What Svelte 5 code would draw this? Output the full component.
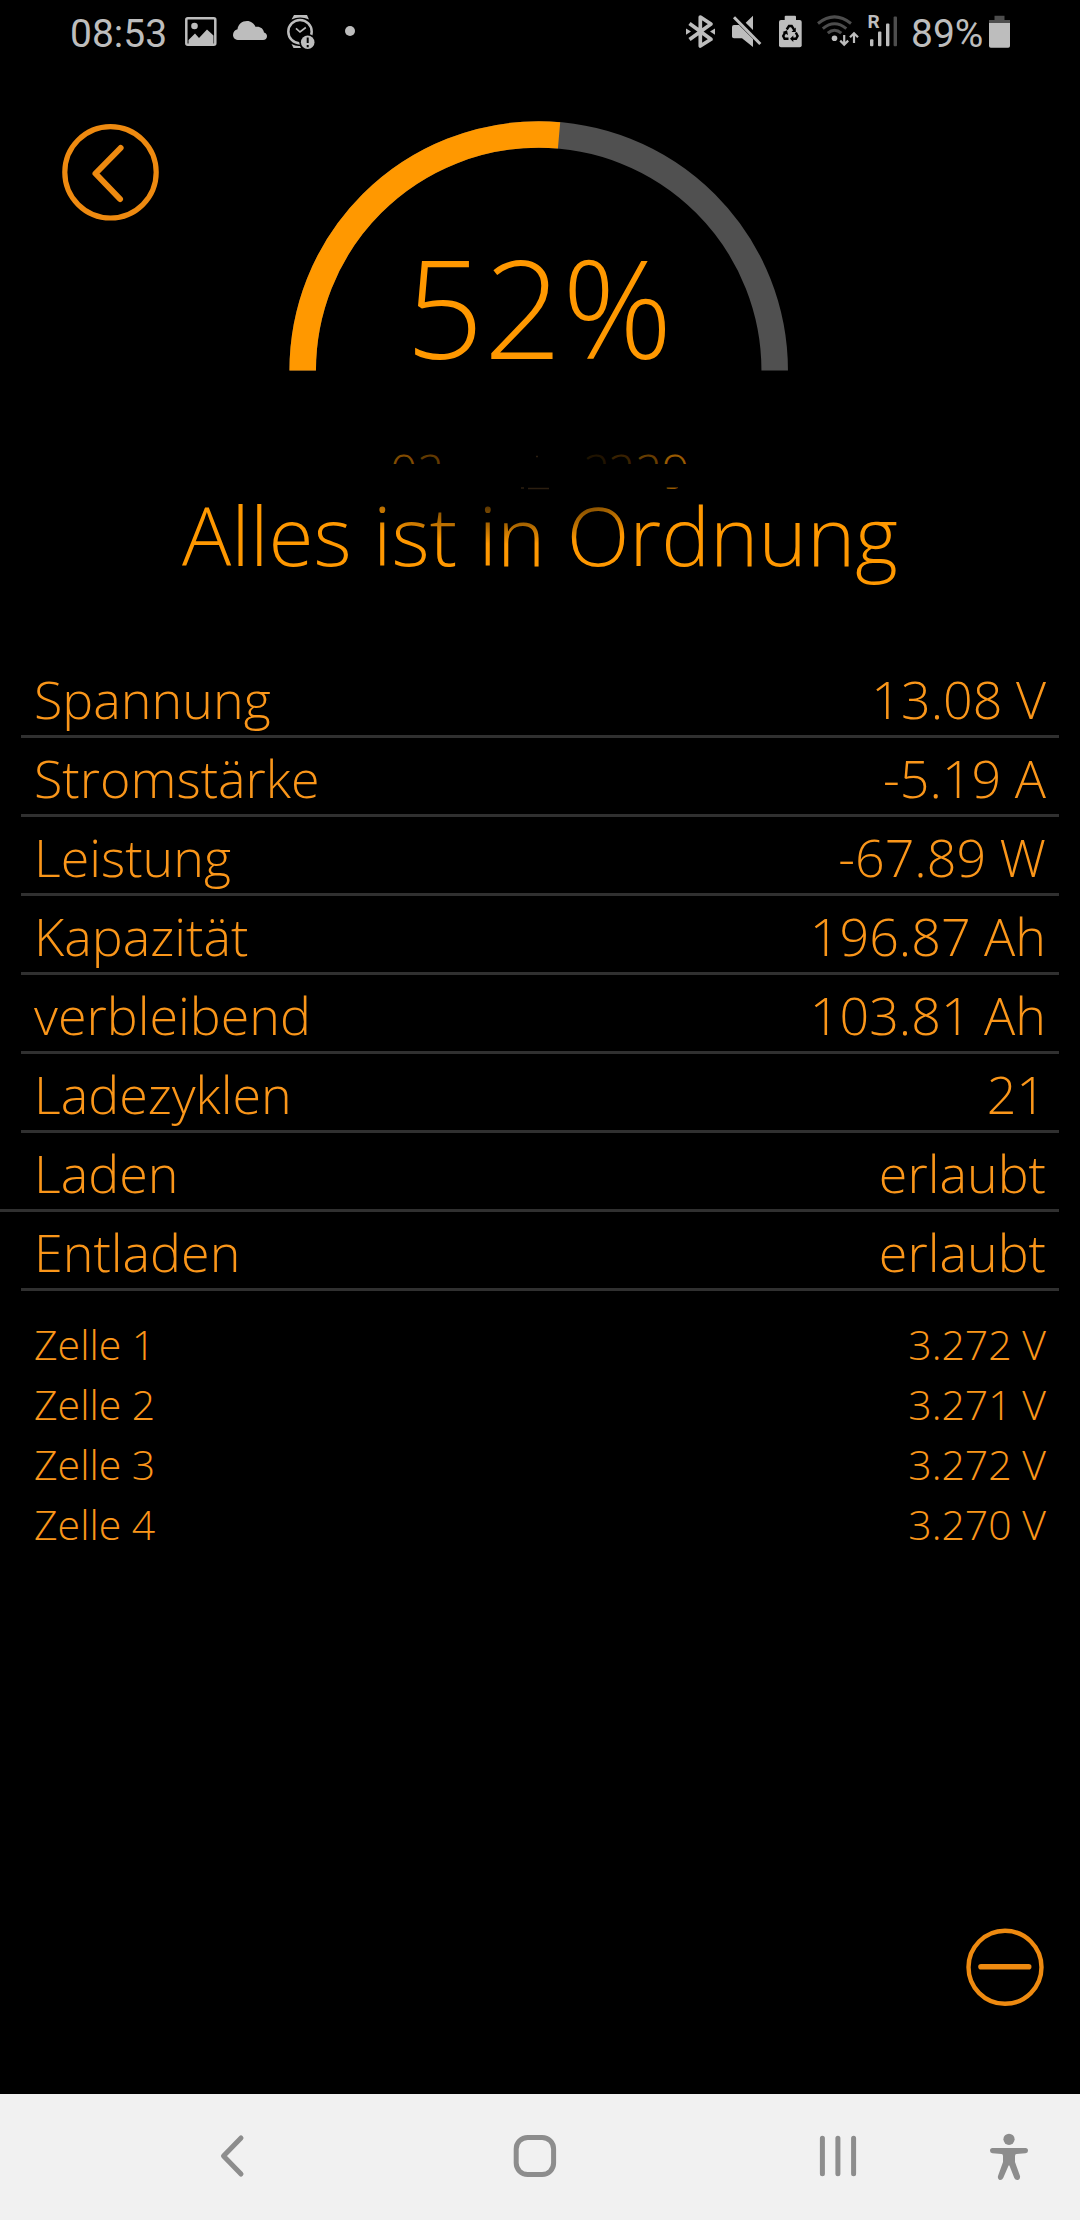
<script>
    // Battery readings
    let charge = 52;
    let capacity = 196.87;
    let remaining = 103.81;

    const rows = [
        { label: "Spannung", value: "13.08 V" },
        { label: "Stromstärke", value: "-5.19 A" },
        { label: "Leistung", value: "-67.89 W" },
        { label: "Kapazität", value: capacity + " Ah" },
        { label: "verbleibend", value: remaining + " Ah" },
        { label: "Ladezyklen", value: "21" },
        { label: "Laden", value: "erlaubt", wide: true },
        { label: "Entladen", value: "erlaubt" },
    ];

    const cells = ["3.272", "3.271", "3.272", "3.270"];

    // Half circle gauge
    const RADIUS = 236;
    const LENGTH = Math.PI * RADIUS;
    const filled = LENGTH * (remaining / capacity);

    // What is left of the faded line above the status
    const ghost = [
        { char: "0", x: 390, opacity: 0.5 },
        { char: "2", x: 417, opacity: 0.38 },
        { char: "2", x: 583, opacity: 0.12 },
        { char: "2", x: 608, opacity: 0.22 },
        { char: "2", x: 635, opacity: 0.4 },
        { char: "9", x: 662, opacity: 0.6 },
    ];
</script>

<div class="screen">
    <div class="statusbar">
        <span class="time">08:53</span>
        <svg class="picture" width="32" height="40" viewBox="0 0 32 40">
            <rect x="1.3" y="6.2" width="29" height="26.6" rx="1.5" fill="none" stroke="currentColor" stroke-width="2.5" />
            <circle cx="9.5" cy="14" r="3.3" />
            <path d="M3.5 28 L10 21.5 L14 26 L22 17.5 L28.5 23.5 V32 H3.5 Z" />
        </svg>
        <svg class="cloud" width="34" height="40" viewBox="0 0 34 40">
            <path d="M6 28 C2.5 28 0 26 0 23 C0 20 1.8 18 4.5 17.3 C5 12.5 9 9 14 9 C18 9 21 11.5 22.5 14.8 C27 14 30.5 16.5 31 20.5 C33 21 34 22.5 34 24.2 C34 26.5 32.5 28 30 28 Z" />
        </svg>
        <svg class="watch" width="28" height="40" viewBox="0 0 28 40">
            <path d="M7 3 H20 L22 7.5 Q13 3.5 4.5 7.5 Z M4.5 32 Q9 34.5 13 34 L14 36 H6.5 Z" />
            <circle cx="13" cy="19.7" r="11.7" fill="none" stroke="currentColor" stroke-width="2.5" />
            <path d="M9 16.3 L13 20 L18.8 15.5" fill="none" stroke="currentColor" stroke-width="1.6" />
            <circle cx="20.7" cy="30.3" r="8.4" fill="#000" />
            <circle cx="20.7" cy="30.3" r="6.8" />
            <path d="M20.7 25.5 V31 M20.7 33 V35.2" stroke="#000" stroke-width="2" />
        </svg>
        <svg class="dot" width="10" height="40" viewBox="0 0 10 40">
            <circle cx="5" cy="19" r="5" />
        </svg>

        <div class="system">
            <svg width="29" height="40" viewBox="0 0 29 40">
                <path d="M3.5 11.5 L25 27.3 L14.3 34 V5 L25 12 L3.5 27.5" fill="none" stroke="currentColor" stroke-width="3.7" stroke-linejoin="round" />
                <path d="M0 16.5 L5 19.6 L0 22.7 Z M29 16.5 L24 19.6 L29 22.7 Z" />
            </svg>
            <svg class="mute" width="30" height="40" viewBox="0 0 30 40">
                <path d="M2 13 H7 L21 27 V35 L10 26.3 H2 Q0 26.3 0 24.5 V15 Q0 13 2 13 Z M13.7 10.7 L21 3.7 V18 Z" />
                <path d="M2 5.3 L28.3 32" stroke="currentColor" stroke-width="3" />
            </svg>
            <svg class="saver" width="23" height="40" viewBox="0 0 23 40">
                <rect x="5.7" y="3.7" width="11.3" height="6" rx="1" />
                <rect x="0" y="8" width="22.7" height="27.2" rx="2" />
                <path d="M7.7 17.5 L10 14 H12.7 L15.2 17.8 M16.8 20.5 L18.6 24 L17 26.8 H13.2 M9.5 26.8 H5.6 L4.2 24 L6.2 20.4" fill="none" stroke="#000" stroke-width="2.4" />
                <path d="M16.8 15.5 V20 H12.5 Z M14.3 23.5 V30 L11 26.8 Z M3.6 20 L8 18.2 L9 23 Z" fill="#000" />
            </svg>
            <svg class="wifi" width="42" height="40" viewBox="0 0 42 40">
                <g fill="none" stroke="#4d4d4d" stroke-width="3">
                    <path d="M1 11.5 Q17.5 -1.7 34 11.5" />
                    <path d="M5.8 16.6 Q17.5 7 29.3 16.6" />
                    <path d="M10.8 21.2 Q17.5 15.2 24.3 21.2" />
                </g>
                <circle cx="17.5" cy="26.3" r="2.8" />
                <path d="M27.2 23 V32 M23.2 28.6 L27.2 32.6 L31.2 28.6 M37 31 V21.6 M33 25.2 L37 21.2 L41 25.2" fill="none" stroke="currentColor" stroke-width="2.2" />
            </svg>
            <svg class="signal" width="30" height="40" viewBox="0 0 30 40">
                <text x="-0.6" y="15.7" class="roaming">R</text>
                <rect x="2" y="27.3" width="3.4" height="7" rx="1" />
                <rect x="10" y="19.5" width="3.4" height="14.8" rx="1" />
                <rect x="18" y="11.5" width="3.4" height="22.8" rx="1" />
                <rect x="25.6" y="4.5" width="3.4" height="29.8" rx="1" fill="#4d4d4d" />
            </svg>
            <span class="percent">89%</span>
            <svg class="battery" width="21" height="40" viewBox="0 0 21 40">
                <path d="M5.5 3.7 H15.5 V8 H21 V12 H0 V8 H5.5 Z" fill="#4d4d4d" />
                <path d="M0 11 H21 V34 Q21 35.8 19.2 35.8 H1.8 Q0 35.8 0 34 Z" />
            </svg>
        </div>
    </div>

    <header>
        <button class="back" aria-label="Zurück">
            <svg width="98" height="98" viewBox="0 0 98 98">
                <circle cx="48.5" cy="49.3" r="45.7" stroke-width="5.2" />
                <path d="M58.6 25 L33.5 50.5 L58 76" stroke-width="6" />
            </svg>
        </button>
        <div class="gauge">
            <svg width="500" height="250" viewBox="0 0 500 250">
                <path class="track" d="M13.7 249.5 A236 236 0 0 1 485.7 249.5" />
                <path class="fill" d="M13.7 249.5 A236 236 0 0 1 485.7 249.5" stroke-dasharray="{filled} {LENGTH}" />
            </svg>
            <span class="charge">{charge}%</span>
        </div>
    </header>

    <section class="message">
        <h1>Alles ist in Ordnung</h1>
        <div class="shade"></div>
        <svg class="ghost" width="1080" height="60" viewBox="0 445 1080 60">
            <clipPath id="strip">
                <rect x="380" y="450" width="320" height="14" />
                <rect x="666" y="487.5" width="12" height="2" />
            </clipPath>
            <g clip-path="url(#strip)">
                {#each ghost as g}
                    <text x={g.x} y="489" opacity={g.opacity}>{g.char}</text>
                {/each}
            </g>
            <path d="M521 488 h3 M528 488.5 h21 M536 456.5 h2" stroke="#2c1f10" stroke-width="1.3" />
        </svg>
    </section>

    <ul class="rows">
        {#each rows as row}
            <li class:wide={row.wide}>
                <span>{row.label}</span>
                <span>{row.value}</span>
            </li>
        {/each}
    </ul>

    <ul class="cells">
        {#each cells as volt, i}
            <li>
                <span>Zelle {i + 1}</span>
                <span>{volt} V</span>
            </li>
        {/each}
    </ul>

    <div class="actions">
        <button aria-label="Weniger">
            <svg width="78" height="78" viewBox="0 0 78 78">
                <circle cx="39" cy="39.3" r="36.5" stroke-width="4.4" />
                <path d="M15 38.7 H62.7" stroke-width="5.6" />
            </svg>
        </button>
    </div>

    <nav>
        <svg class="nav-back" width="26" height="44" viewBox="0 0 26 44">
            <path d="M22 4 L4.5 22 L22 40" />
        </svg>
        <svg class="nav-home" width="44" height="44" viewBox="0 0 44 44">
            <rect x="3.2" y="3.4" width="37.4" height="37.2" rx="11.5" />
        </svg>
        <svg class="nav-recent" width="38" height="44" viewBox="0 0 38 44">
            <path d="M3.4 4.3 V39.7 M18.9 4.3 V39.7 M34.6 4.3 V39.7" />
        </svg>
        <svg class="nav-access" width="40" height="50" viewBox="0 0 40 50">
            <circle cx="20" cy="8.3" r="5.6" />
            <path d="M3.5 17 H36.5 Q39 17 39 19.7 Q39 22 36.5 22.3 L27.5 23 Q26 23.2 26 25 V31 L31 45 Q31.5 48 29 49 Q26.5 49.5 25.3 47 L20.4 34.5 H19.6 L14.2 47 Q13 49.5 10.5 49 Q8.3 48 9 45 L14 31 V25 Q14 23.2 12.5 23 L3.5 22.3 Q1 22 1 19.7 Q1 17 3.5 17 Z" />
        </svg>
    </nav>
</div>

<style>
    :global(body) {
        background: #000;
    }

    .screen {
        display: flex;
        flex-direction: column;
        width: 1080px;
        height: 2220px;
        overflow: hidden;
        background: #000;
        color: #ff9800;
        font-family: "Open Sans", sans-serif;
        font-weight: 300;
    }

    svg {
        display: block;
        flex: none;
    }

    button {
        display: block;
        padding: 0;
        border: 0;
        background: none;
    }

    button svg {
        fill: none;
        stroke: #ee8a10;
        stroke-linecap: round;
        stroke-linejoin: round;
    }

    ul {
        margin: 0;
        padding: 0;
        list-style: none;
    }

    .statusbar {
        display: flex;
        align-items: center;
        height: 64px;
        box-sizing: border-box;
        padding: 0 70px;
        color: #bdbdbd;
        font: 400 39px/64px Roboto, sans-serif;
    }

    .statusbar svg {
        fill: currentColor;
    }

    .time {
        width: 114.5px;
        padding-top: 3px;
    }

    .cloud {
        margin-left: 16.5px;
    }

    .watch {
        margin-left: 20px;
    }

    .dot {
        margin-left: 30px;
    }

    .system {
        display: flex;
        align-items: center;
        margin-left: auto;
    }

    .mute {
        margin-left: 17px;
    }

    .saver {
        margin-left: 16.5px;
    }

    .wifi {
        margin-left: 15.5px;
    }

    .signal {
        margin-left: 9px;
        overflow: visible;
    }

    .roaming {
        font: 700 19px Roboto, sans-serif;
    }

    .percent {
        width: 78px;
        margin-left: 13px;
        padding-top: 3px;
        white-space: nowrap;
    }

    header {
        display: flex;
        height: 306px;
        padding: 57px 0 0 62px;
        box-sizing: border-box;
        align-items: flex-start;
    }

    .back {
        margin-top: 2px;
    }

    .gauge {
        display: grid;
        width: 500px;
        margin-left: 129px;
    }

    .gauge > * {
        grid-area: 1 / 1;
    }

    .gauge path {
        fill: none;
        stroke-width: 26.5;
    }

    .track {
        stroke: #505050;
    }

    .fill {
        stroke: #ff9800;
    }

    .charge {
        align-self: end;
        justify-self: center;
        margin-bottom: -28px;
        font-size: 137px;
        line-height: 186px;
    }

    .message {
        position: relative;
        height: 289px;
        padding-top: 108px;
        box-sizing: border-box;
        text-align: center;
    }

    h1 {
        margin: 0;
        font-size: 82px;
        font-weight: 300;
        line-height: 112px;
        white-space: nowrap;
    }

    .shade {
        position: absolute;
        left: 310px;
        top: 60px;
        width: 400px;
        height: 114px;
        background: radial-gradient(closest-side, #000 0%, rgba(0, 0, 0, 0.6) 40%, transparent 100%);
    }

    .ghost {
        position: absolute;
        left: 0;
        top: 75px;
        fill: #ff9800;
        font-size: 48px;
    }

    .rows li,
    .cells li {
        display: flex;
        justify-content: space-between;
        color: #fa961a;
    }

    .rows li {
        height: 79px;
        margin: 0 21px;
        padding: 0 13px 0 13px;
        box-sizing: border-box;
        border-bottom: 3px solid #303030;
        font-size: 52px;
        line-height: 80px;
    }

    .rows li.wide {
        margin-left: 0;
        padding-left: 34px;
    }

    .cells {
        padding: 23px 34px 0;
    }

    .cells li {
        height: 60px;
        font-size: 41px;
        line-height: 60px;
    }

    .actions {
        display: flex;
        justify-content: flex-end;
        margin-top: auto;
        padding: 0 36px 88px;
    }

    nav {
        display: flex;
        align-items: center;
        height: 126px;
        padding: 0 0 2px 219px;
        box-sizing: border-box;
        background: #f1f1f1;
    }

    nav svg {
        fill: none;
        stroke: #8d8d8d;
        stroke-width: 5;
        stroke-linecap: round;
        stroke-linejoin: round;
    }

    .nav-home {
        margin-left: 268px;
    }

    .nav-recent {
        margin-left: 262px;
    }

    .nav-access {
        margin-left: 132px;
    }

    nav .nav-access {
        fill: #8d8d8d;
        stroke: none;
    }
</style>
